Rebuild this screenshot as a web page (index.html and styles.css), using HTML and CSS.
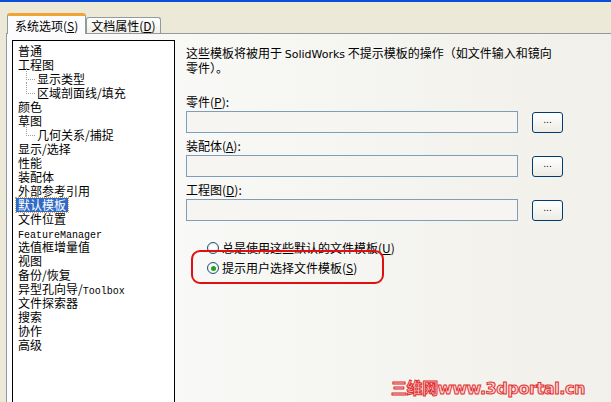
FILE: index.html
```html
<!DOCTYPE html>
<html lang="zh-CN">
<head>
  <meta charset="UTF-8">
  <title>系统选项 - 默认模板</title>
  <link rel="stylesheet" href="styles.css">
</head>
<body>
<div class="titlebar"></div>

<!-- Tabs -->
<div class="tabs">
  <div class="tab active">系统选项(<u>S</u>)</div>
  <div class="tab">文档属性(<u>D</u>)</div>
</div>

<div class="pane">
  <!-- Option tree -->
  <ul class="tree">
    <li>普通</li>
    <li>工程图</li>
    <li class="child">显示类型</li>
    <li class="child last">区域剖面线/填充</li>
    <li>颜色</li>
    <li>草图</li>
    <li class="child last">几何关系/捕捉</li>
    <li>显示/选择</li>
    <li>性能</li>
    <li>装配体</li>
    <li>外部参考引用</li>
    <li><span class="selected">默认模板</span></li>
    <li>文件位置</li>
    <li><span class="latin">FeatureManager</span></li>
    <li>选值框增量值</li>
    <li>视图</li>
    <li>备份/恢复</li>
    <li>异型孔向导/<span class="latin">Toolbox</span></li>
    <li>文件探索器</li>
    <li>搜索</li>
    <li>协作</li>
    <li>高级</li>
  </ul>

  <!-- Template settings -->
  <div class="content">
    <p class="intro">这些模板将被用于 <span class="ui">SolidWorks</span> 不提示模板的操作（如文件输入和镜向<br>零件）。</p>

    <div class="field">
      <label>零件(<u>P</u>):</label>
      <div class="row">
        <input type="text">
        <button>...</button>
      </div>
    </div>

    <div class="field">
      <label>装配体(<u>A</u>):</label>
      <div class="row">
        <input type="text">
        <button>...</button>
      </div>
    </div>

    <div class="field">
      <label>工程图(<u>D</u>):</label>
      <div class="row">
        <input type="text">
        <button>...</button>
      </div>
    </div>

    <div class="options">
      <div class="radio"><span class="dot"></span><span>总是使用这些默认的文件模板(<u>U</u>)</span></div>
      <div class="radio checked"><span class="dot"></span><span>提示用户选择文件模板(<u>S</u>)</span></div>
      <div class="highlight"></div>
    </div>
  </div>

  <div class="watermark">三维网www.3dportal.cn</div>
</div>
</body>
</html>
```

FILE: styles.css
```css
* {
  box-sizing: border-box;
}

body {
  margin: 0;
  width: 611px;
  height: 402px;
  overflow: hidden;
  background-color: #ece9d8;
  font-family: "Noto Sans CJK SC", sans-serif;
  font-size: 12px;
  color: #000;
}

u {
  text-decoration: underline;
  text-underline-offset: 1px;
}

.titlebar {
  height: 2px;
  background-color: #0a4fd8;
}

/* Tabs */
.tabs {
  display: flex;
  align-items: flex-end;
  height: 31px;
  padding-left: 7px;
}

.tab {
  height: 16px;
  padding: 0 4px;
  line-height: 15px;
  border: 1px solid #919b9c;
  border-bottom: none;
  border-radius: 3px 3px 0 0;
  background: linear-gradient(#ffffff, #f0efe7);
  white-space: nowrap;
}

.tab.active {
  position: relative;
  z-index: 1;
  height: 21px;
  margin-bottom: -1px;
  padding: 0 7px;
  line-height: 19px;
  border-top: 3px solid #f0a434;
  background: #fcfcfe;
}

/* Pane */
.pane {
  position: relative;
  height: 369px;
  margin-left: 6px;
  padding: 6px 0 0 5px;
  display: flex;
  border-top: 1px solid #919b9c;
  border-left: 1px solid #919b9c;
  background: linear-gradient(90deg, #fcfcfe 0%, #f7f7f4 40%, #f1f0ea 100%);
}

.tree {
  list-style: none;
  margin: 0;
  padding: 3px 0 0 5px;
  width: 163px;
  height: 370px;
  flex-shrink: 0;
  border: 1px solid #000;
  background-color: #fff;
}

.tree li {
  position: relative;
  height: 14px;
  line-height: 14px;
  white-space: nowrap;
}

.tree li.child {
  padding-left: 19px;
}

.tree li.child::before {
  content: "";
  position: absolute;
  left: 8px;
  top: -4px;
  width: 8px;
  height: 11px;
  border-left: 1px dotted #a0a0a0;
  border-bottom: 1px dotted #a0a0a0;
}

.selected {
  display: inline-block;
  margin-left: -2px;
  padding: 0 2px;
  background-color: #316ac5;
  color: #fff;
  outline: 1px dotted #d0a060;
}

.latin {
  font-family: "Liberation Mono", monospace;
  font-size: 10px;
}

/* Right side */
.content {
  padding: 6px 0 0 11px;
}

.ui {
  font-family: "DejaVu Sans", sans-serif;
  font-size: 11px;
}

.intro {
  margin: 0 0 21px;
  line-height: 13px;
}

.field label {
  display: block;
  height: 14px;
  line-height: 14px;
  margin-bottom: 2px;
}

.field {
  margin-bottom: 6px;
}

.row {
  display: flex;
  align-items: flex-end;
  gap: 14px;
}

.row input {
  width: 332px;
  height: 22px;
  margin: 0;
  border: 1px solid #7f9db9;
  background-color: #f6f5f1;
}

.row button {
  width: 31px;
  height: 21px;
  margin: 0;
  padding: 0 0 4px;
  border: 1px solid #003c74;
  border-radius: 3px;
  background: linear-gradient(#ffffff, #ecebe4);
  font-family: "DejaVu Sans", sans-serif;
  font-size: 9px;
  line-height: 9px;
}

/* Radio options */
.options {
  position: relative;
  padding: 11px 0 0 21px;
}

.radio {
  display: flex;
  align-items: center;
  gap: 3px;
  height: 20px;
  line-height: 20px;
}

.dot {
  width: 12px;
  height: 12px;
  border: 1px solid #1c5180;
  border-radius: 50%;
  background: radial-gradient(circle, #ffffff 40%, #dcd9cc 100%);
  display: flex;
  align-items: center;
  justify-content: center;
}

.radio.checked .dot::after {
  content: "";
  width: 5px;
  height: 5px;
  border-radius: 50%;
  background-color: #21a121;
}

.highlight {
  position: absolute;
  left: 5px;
  top: 23px;
  width: 193px;
  height: 34px;
  border: 2px solid #e01010;
  border-radius: 9px;
}

.watermark {
  position: absolute;
  left: 384px;
  top: 341px;
  font-family: "DejaVu Sans", "Noto Sans CJK SC", sans-serif;
  font-size: 16px;
  font-weight: bold;
  letter-spacing: -0.4px;
  color: #fbd4d4;
  -webkit-text-stroke: 1px #e03030;
}
```
